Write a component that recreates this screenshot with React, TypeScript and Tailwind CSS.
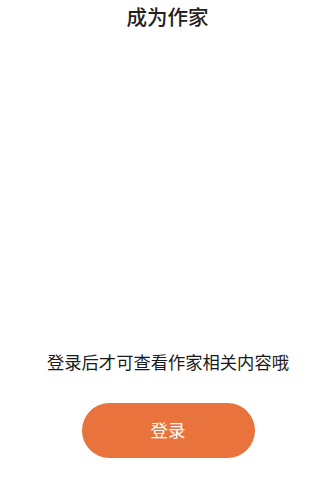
import React from 'react';

export default function App() {
  return (
    <div
      className="flex flex-col items-center w-full h-[481px] bg-white"
      style={{ fontFamily: '"Noto Sans CJK SC", "Noto Sans", sans-serif' }}
    >
      <h1 className="mt-[3px] ml-[1px] text-[20.5px] leading-[26px] font-medium text-[#222222]">成为作家</h1>
      <div className="flex-1" />
      <p className="ml-[2px] text-[17.3px] leading-[24px] text-[#1a1a1a] mb-[29px]">登录后才可查看作家相关内容哦</p>
      <button className="ml-[2px] w-[173px] h-[55px] rounded-full bg-[#e8733d] text-white text-[17.5px] mb-[23px]">
        登录
      </button>
    </div>
  );
}
